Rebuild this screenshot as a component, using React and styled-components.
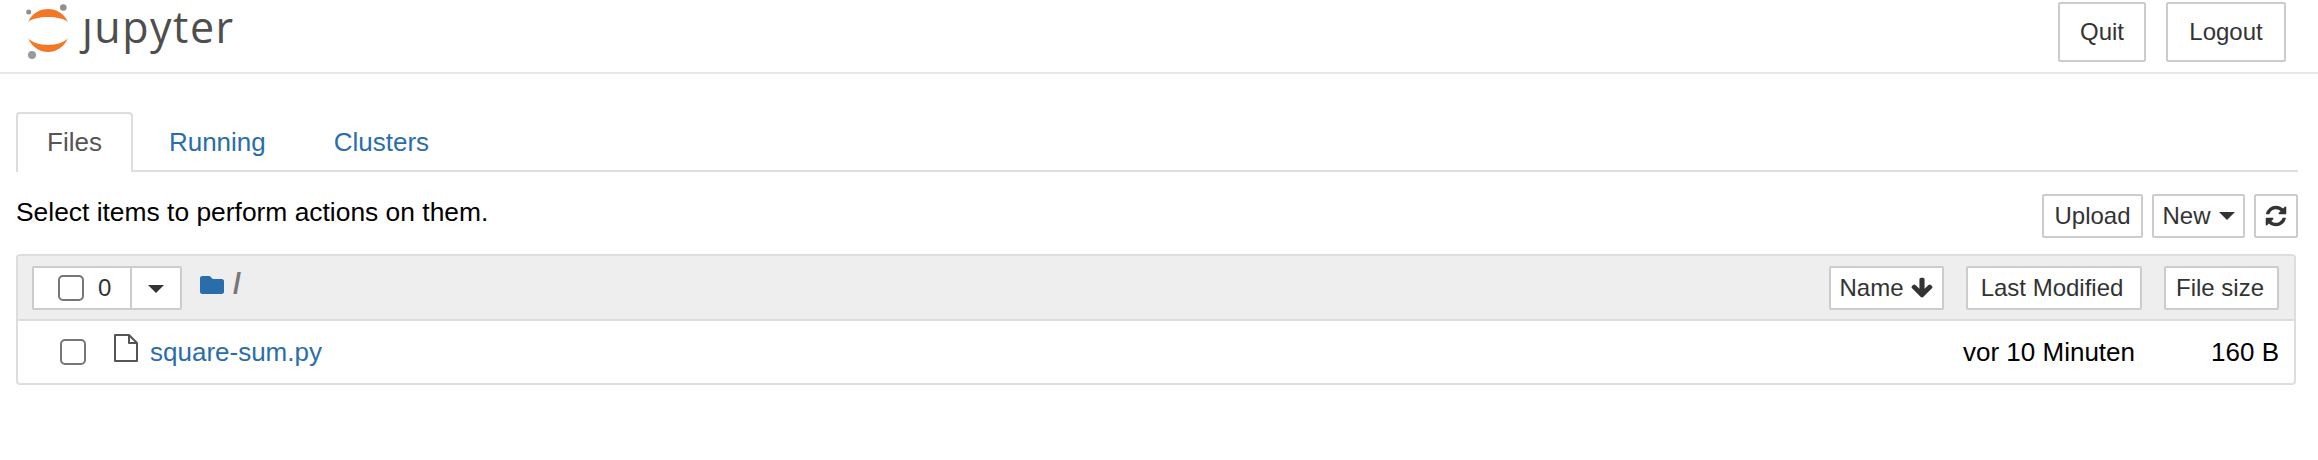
import styled, { createGlobalStyle } from "styled-components";
import { FaFolder } from "react-icons/fa";

const GlobalStyle = createGlobalStyle`
    html, body {
        margin: 0;
        background: #fff;
        font-family: "Liberation Sans", Arial, sans-serif;
        color: #000;
    }
    * {
        box-sizing: border-box;
    }
`;

const Header = styled.header`
    height: 74px;
    display: flex;
    align-items: flex-start;
    justify-content: space-between;
    padding: 2px 32px 0 26px;
    border-bottom: 2px solid #e7e7e7;
`;

const Logo = styled.div`
    display: flex;
    align-items: flex-start;
    gap: 10px;
    margin-top: -2px;
`;

const Wordmark = styled.span`
    font: 500 43px/54px "Open Sans", sans-serif;
    color: #4e4e4e;
    letter-spacing: 1.5px;
`;

const HeaderButtons = styled.div`
    display: flex;
    gap: 20px;
`;

const Button = styled.button`
    display: inline-flex;
    align-items: center;
    justify-content: center;
    gap: ${(p) => p.$gap || 0}px;
    height: ${(p) => p.$height || 44}px;
    width: ${(p) => p.$width}px;
    padding: 0 ${(p) => p.$nudge || 0}px 0 0;
    background: #fff;
    border: 2px solid #ccc;
    border-radius: 2px;
    color: #333;
    font: 24px "Liberation Sans", Arial, sans-serif;
`;

const Main = styled.main`
    padding: 38px 20px 0 16px;
`;

const Tabs = styled.nav`
    display: flex;
    gap: 4px;
    height: 60px;
    border-bottom: 2px solid #ddd;
`;

const Tab = styled.a`
    height: 60px;
    padding: 0 ${(p) => (p.$active ? 29 : 30)}px;
    line-height: 57px;
    font-size: 26px;
    color: ${(p) => (p.$active ? "#555" : "#296eaa")};
    background: ${(p) => (p.$active ? "#fff" : "transparent")};
    border: 2px solid ${(p) => (p.$active ? "#ddd" : "transparent")};
    border-bottom: 0;
    border-radius: 4px 4px 0 0;
`;

const Toolbar = styled.div`
    display: flex;
    align-items: flex-start;
    justify-content: space-between;
    height: 82px;
    padding-top: 22px;
`;

const Hint = styled.span`
    font-size: 26.4px;
    line-height: 30px;
    margin-top: 3px;
`;

const Actions = styled.div`
    display: flex;
    gap: 9px;
`;

const Caret = styled.span`
    display: inline-block;
    width: 0;
    height: 0;
    border-left: 8px solid transparent;
    border-right: 8px solid transparent;
    border-top: 8px solid #333;
`;

const Panel = styled.section`
    margin-right: 2px;
    border: 2px solid #ddd;
    border-radius: 4px;
`;

const PanelHead = styled.div`
    display: flex;
    align-items: center;
    height: 65px;
    padding: 0 15px 0 14px;
    background: #eee;
    border-bottom: 2px solid #ddd;
`;

const SelectGroup = styled.div`
    display: flex;
    height: 44px;
    width: 150px;
    background: #fff;
    border: 2px solid #ccc;
    border-radius: 2px;
`;

const SelectCount = styled.div`
    display: flex;
    align-items: center;
    gap: 14px;
    width: 98px;
    padding-left: 24px;
    border-right: 2px solid #ccc;
    font-size: 24px;
    color: #333;
`;

const SelectCaret = styled.div`
    flex: 1;
    display: flex;
    align-items: center;
    justify-content: center;
    padding-top: 2px;
`;

const CheckBox = styled.input.attrs({ type: "checkbox" })`
    appearance: none;
    flex: none;
    width: 26px;
    height: 26px;
    margin: 0;
    background: #fff;
    border: 2px solid #767676;
    border-radius: 5px;
`;

const Breadcrumb = styled.div`
    display: flex;
    align-items: center;
    gap: 9px;
    margin-left: 18px;
    margin-top: -6px;
    color: #777;
    font-size: 29px;
    font-weight: 700;
`;

const SortButtons = styled.div`
    display: flex;
    gap: 22px;
    margin-left: auto;
`;

const Row = styled.div`
    display: flex;
    align-items: center;
    height: 62px;
    padding: 0 15px 0 42px;
    font-size: 26px;
`;

const FileName = styled.a`
    margin-left: 12px;
    color: #296eaa;
`;

const FileIcon = styled.svg`
    margin: -8px 0 0 28px;
`;

const Modified = styled.span`
    margin-left: auto;
`;

const Size = styled.span`
    width: 144px;
    text-align: right;
`;

const JupyterMark = () => (
    <svg width="46" height="62" viewBox="0 0 46 62">
        <path d="M2 22 C10 4.700 34 4.700 42 22 C34 15.300 10 15.300 2 22 Z" fill="#f37726" />
        <path d="M2 38 C10 56.700 34 56.700 42 38 C34 47.300 10 47.300 2 38 Z" fill="#f37726" />
        <circle cx="2.700" cy="12" r="2.500" fill="#8f8f90" />
        <circle cx="37.300" cy="7.500" r="3.300" fill="#8f8f90" />
        <circle cx="6" cy="55" r="4" fill="#9a9a9b" />
    </svg>
);

const RefreshIcon = () => (
    <svg width="24" height="24" viewBox="0 0 1792 1792">
        <path
            fill="#333"
            d="M1639 1056q0 5-1 7-64 268-268 434.500t-478 166.500q-146 0-282.500-55t-243.500-157l-129 129q-19 19-45 19t-45-19-19-45v-448q0-26 19-45t45-19h448q26 0 45 19t19 45-19 45l-137 137q71 66 161 102t187 36q134 0 250-65t186-179q11-17 53-117 8-23 30-23h192q13 0 22.500 9.500t9.500 22.500zm25-800v448q0 26-19 45t-45 19h-448q-26 0-45-19t-19-45 19-45l138-138q-148-137-349-137-134 0-250 65t-186 179q-11 17-53 117-8 23-30 23h-199q-13 0-22.500-9.500t-9.500-22.500v-7q65-268 270-434.500t480-166.500q146 0 284 55.500t245 156.500l130-129q19-19 45-19t45 19 19 45z"
        />
    </svg>
);

const ArrowDownIcon = () => (
    <svg width="24" height="24" viewBox="0 0 1792 1792">
        <path
            fill="#333"
            d="M1675 832q0 53-37 90l-651 652q-39 37-91 37-53 0-90-37l-651-652q-38-36-38-90 0-53 38-91l74-75q39-37 91-37 53 0 90 37l294 294v-704q0-52 38-90t90-38h128q52 0 90 38t38 90v704l294-294q37-37 90-37 52 0 91 37l75 75q37 39 37 91z"
        />
    </svg>
);

const App = () => {
    return (
        <>
            <GlobalStyle />
            <Header>
                <Logo>
                    <JupyterMark />
                    <Wordmark>ȷupyter</Wordmark>
                </Logo>
                <HeaderButtons>
                    <Button $height={60} $width={88}>Quit</Button>
                    <Button $height={60} $width={120}>Logout</Button>
                </HeaderButtons>
            </Header>
            <Main>
                <Tabs>
                    <Tab $active>Files</Tab>
                    <Tab>Running</Tab>
                    <Tab>Clusters</Tab>
                </Tabs>
                <Toolbar>
                    <Hint>Select items to perform actions on them.</Hint>
                    <Actions>
                        <Button $width={101}>Upload</Button>
                        <Button $width={93} $gap={8}>New <Caret /></Button>
                        <Button $width={44}><RefreshIcon /></Button>
                    </Actions>
                </Toolbar>
                <Panel>
                    <PanelHead>
                        <SelectGroup>
                            <SelectCount>
                                <CheckBox />
                                0
                            </SelectCount>
                            <SelectCaret><Caret /></SelectCaret>
                        </SelectGroup>
                        <Breadcrumb>
                            <FaFolder size={24} color="#296eaa" />
                            /
                        </Breadcrumb>
                        <SortButtons>
                            <Button $width={115} $gap={6}>Name <ArrowDownIcon /></Button>
                            <Button $width={176} $nudge={4}>Last Modified</Button>
                            <Button $width={115} $nudge={3}>File size</Button>
                        </SortButtons>
                    </PanelHead>
                    <Row>
                        <CheckBox />
                        <FileIcon width="24" height="28" viewBox="0 0 24 28">
                            <path
                                d="M1 1 H15 L23 9 V27 H1 Z M15 1 V9 H23"
                                fill="none"
                                stroke="#555"
                                strokeWidth="2"
                                strokeLinejoin="round"
                            />
                        </FileIcon>
                        <FileName>square-sum.py</FileName>
                        <Modified>vor 10 Minuten</Modified>
                        <Size>160 B</Size>
                    </Row>
                </Panel>
            </Main>
        </>
    );
};

export default App;
